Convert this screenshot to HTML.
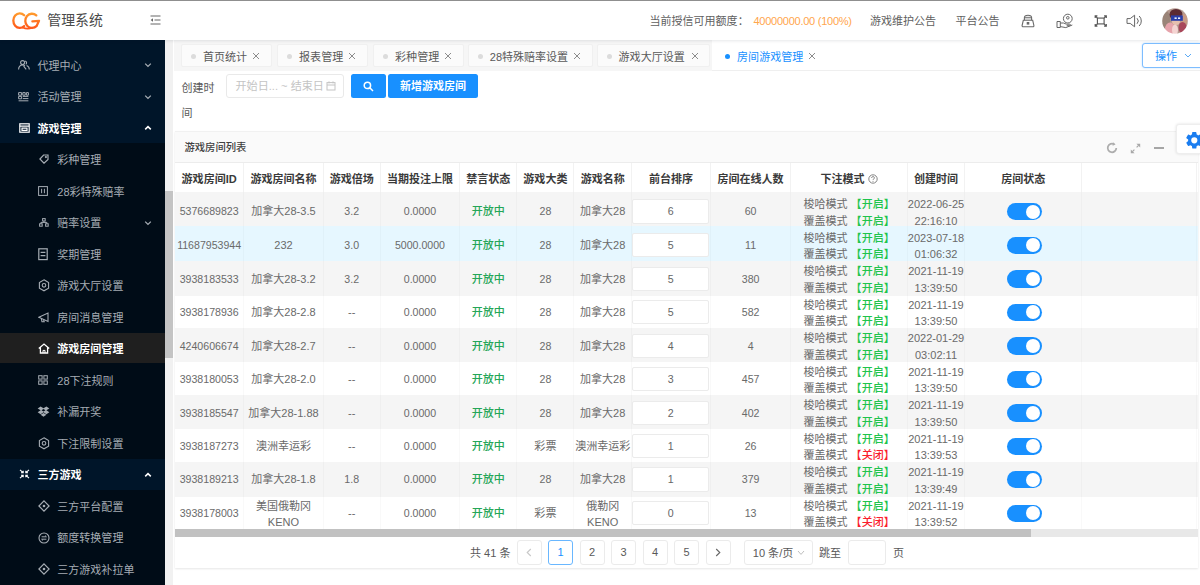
<!DOCTYPE html>
<html lang="zh-CN">
<head>
<meta charset="utf-8">
<title>管理系统</title>
<style>
*{box-sizing:border-box;margin:0;padding:0}
html,body{width:1200px;height:585px;overflow:hidden;background:#fff}
body{position:relative;font-family:"Liberation Sans","Noto Sans CJK SC",sans-serif;font-size:11.025px;color:#595959;line-height:1}
.abs{position:absolute}
/* header */
#hdr{position:absolute;left:0;top:0;width:1200px;height:39.5px;background:#fff;box-shadow:0 1px 3px rgba(0,21,41,.10);z-index:5}
#topline{position:absolute;left:0;top:0;width:1200px;height:1px;background:#8f8f8f;z-index:6}
#title{position:absolute;left:47.3px;top:12.3px;font-size:13.9px;color:#4a4a4a;letter-spacing:0;line-height:16px}
.ht{position:absolute;top:15.4px;line-height:12px;font-size:11.025px;color:#606060;white-space:nowrap}
/* sidebar */
#side{position:absolute;left:0;top:39.5px;width:165.3px;height:546px;background:#001529;z-index:2}
.mi{position:absolute;left:0;width:165.3px;height:30px;color:#a6adb4;white-space:nowrap}
.mi .tx{position:absolute;top:10.300px;line-height:12px;font-size:11.025px}
.mi.top .tx{left:37.500px}
.mi.sub .tx{left:57.300px}
.mi.b{color:#fff}
.mi.b .tx{font-weight:bold}
.mi svg{position:absolute}
.subbg{position:absolute;left:0;width:165.3px;background:#000c17}
.arr{position:absolute;left:144px;top:12px;width:8px;height:8px}
/* sidebar scrollbar */
#sbt{position:absolute;left:165.3px;top:39.5px;width:8.2px;height:546px;background:#f1f1f1;z-index:2}
#sbth{position:absolute;left:165.3px;top:190.5px;width:8.2px;height:167.5px;background:#c4c4c4;z-index:3}
/* tabs */
#tabs{position:absolute;left:173.5px;top:39.5px;width:1027px;height:31.3px;background:#fff;border-bottom:1px solid #efefef}
.tab{position:absolute;top:43.7px;height:23.4px;background:#fbfbfb;border:1px solid #f0f0f0;border-radius:2px;color:#595959;white-space:nowrap}
.tab .dot{position:absolute;left:11px;top:9.3px;width:5px;height:5px;border-radius:50%;background:#dcdcdc}
.tab .t{position:absolute;left:23.5px;top:6.5px;line-height:12px}
.tab .x{position:absolute;top:7.8px;width:8px;height:8px}
.tab.on{background:#fff;border-color:#fff;color:#1890ff}
#strip{position:absolute;left:173.5px;top:39.5px;width:538px;height:31.3px;background:#f6f6f6}
.tab.on .dot{background:#1890ff}
/* card */
#card{position:absolute;left:175px;top:131px;width:1022.5px;height:436.8px;background:#fff;box-shadow:0 1px 2px rgba(0,0,0,.10)}
#chead{position:absolute;left:175px;top:131px;width:1022.5px;height:32px;background:#fafafa;border-top:1px solid #f1f1f1;border-bottom:1px solid #ececec}
.tr{position:absolute;left:175px;width:1022.5px;background:#fff}
.tr.g{background:#f5f5f5}
.tr.h{background:#e6f7ff}
.th,.td{position:absolute;top:0;bottom:0;display:flex;align-items:center;justify-content:center;text-align:center;white-space:nowrap}
.th{font-weight:bold;color:#3a3a3a;border-right:1px solid #f2f2f2;line-height:12px}
.td{color:#6a6a6a;border-right:1px solid rgba(0,0,0,.022);line-height:16.2px}
.ok{color:#25a658;font-weight:500}
.n{font-size:10.6px}
.on1{color:#1fc44c;font-weight:500}
.off1{color:#fa1e2d;font-weight:500}
.inp{display:inline-block;width:76.8px;height:24.2px;border:1px solid #ebebeb;border-radius:2px;background:#fff;line-height:22.2px;margin-left:-.5px;vertical-align:middle;color:#666}
.sw{display:inline-block;left:1.5px;width:34.6px;height:17.3px;border-radius:9px;background:#1890ff;position:relative;vertical-align:middle}
.sw:after{content:"";position:absolute;right:1.6px;top:1.6px;width:14.1px;height:14.1px;border-radius:50%;background:#fff}
/* pagination */
.pg{position:absolute;top:540px;height:25.2px;width:25.2px;border:1px solid #ebebeb;border-radius:3px;background:#fff;text-align:center;line-height:23px;color:#595959;font-size:11.025px}
.pg.on{border-color:#69b7ff;color:#1890ff}
.pt{position:absolute;top:546.8px;line-height:13px;color:#595959;white-space:nowrap}
</style>
</head>
<body>
<div id="topline"></div>
<div id="hdr">
  <svg class="abs" style="left:0;top:0" width="60" height="39" viewBox="0 0 60 39">
    <defs><linearGradient id="lg" x1="0" y1="12" x2="0" y2="29" gradientUnits="userSpaceOnUse"><stop offset="0" stop-color="#ffa02e"/><stop offset="1" stop-color="#ff5418"/></linearGradient></defs>
    <path d="M24.200 15.200A6.500 7.300 0 1 0 24.200 26" fill="none" stroke="url(#lg)" stroke-width="2.300" stroke-linecap="round"/>
    <path d="M36.300 15.400A6.700 7.100 0 1 0 36.700 25.900L39 20.800L32.400 21.300" fill="none" stroke="url(#lg)" stroke-width="2.300" stroke-linecap="round" stroke-linejoin="round"/>
    <path d="M32 27.700Q27.500 29.800 22.500 27.400" fill="none" stroke="url(#lg)" stroke-width="1.800" stroke-linecap="round"/>
  </svg>
  <div id="title">管理系统</div>
  <svg class="abs" style="left:150px;top:15px" width="11" height="10" viewBox="0 0 11 10"><path d="M0.5 1H10.5M4.5 5H10.5M0.5 9H10.5" stroke="#666" stroke-width="1" fill="none"/><path d="M3 3.2L0.6 5L3 6.8Z" fill="#666"/></svg>
  <div class="ht" style="left:649.5px">当前授信可用额度：</div>
  <div class="ht" style="left:753.5px;color:#ffa64d;letter-spacing:-.26px">40000000.00 (100%)</div>
  <div class="ht" style="left:870px">游戏维护公告</div>
  <div class="ht" style="left:955.5px">平台公告</div>
  <!-- lock -->
  <svg class="abs" style="left:1021px;top:14px" width="14" height="14" viewBox="0 0 14 14" fill="none" stroke="#6a6a6a" stroke-width="1.1"><path d="M3.4 6.300V3.600C3.400 0.400 10.600 0.400 10.600 3.600V6.300" fill="#e9e9e9"/><path d="M3.600 3.700h6.800" stroke-width=".9"/><path d="M2.300 6.300h9.400l1.200 5.200c.2.800-.3 1.300-1.100 1.300H2.200c-.8 0-1.300-.5-1.100-1.300z"/><rect x="5.700" y="8" width="2.600" height="2.600" fill="#6a6a6a" stroke="none"/></svg>
  <!-- user hand -->
  <svg class="abs" style="left:1056px;top:13px" width="19" height="16" viewBox="0 0 19 16" fill="none" stroke="#666" stroke-width="1"><circle cx="11.8" cy="5.6" r="4.4"/><circle cx="11.8" cy="4.8" r="1.3"/><path d="M1 8.5h3.3v6H1zM4.3 10h3.2l3 1.2h3.2c1 0 1 1.5 0 1.5h-3M4.3 13.6l5.5 1 6.5-2.6"/></svg>
  <!-- fullscreen -->
  <svg class="abs" style="left:1093.500px;top:14.800px" width="13.500" height="12" viewBox="0 0 15 14" fill="none" stroke="#555" stroke-width="1.300"><rect x="3.600" y="3.600" width="7.800" height="6.800"/><path d="M1 3.600V1h2.600M11.400 1H14v2.600M14 10.400V13h-2.600M3.600 13H1v-2.600M1 1l2.600 2.600M14 1l-2.600 2.600M14 13l-2.600-2.600M1 13l2.600-2.600"/></svg>
  <!-- sound -->
  <svg class="abs" style="left:1126px;top:14px" width="18" height="14" viewBox="0 0 18 14" fill="none" stroke="#666" stroke-width="1"><path d="M1 4.6h3.2L8.6 1.2v11.6L4.2 9.4H1z"/><path d="M11 4.2a4 4 0 0 1 0 5.6M13.2 2a7 7 0 0 1 0 10"/></svg>
  <!-- avatar -->
  <svg class="abs" style="left:1162.400px;top:8px" width="26" height="26" viewBox="0 0 26 26">
    <defs><clipPath id="av"><circle cx="13" cy="13" r="12.800"/></clipPath><filter id="bl" x="-10%" y="-10%" width="120%" height="120%"><feGaussianBlur stdDeviation="0.650"/></filter></defs>
    <g clip-path="url(#av)"><g filter="url(#bl)"><rect x="-2" y="-2" width="30" height="30" fill="#b59a90"/>
    <ellipse cx="4" cy="12" rx="4.500" ry="9" fill="#9a8478"/>
    <ellipse cx="14" cy="6.500" rx="6.500" ry="5.500" fill="#5b2b33"/>
    <ellipse cx="14" cy="13" rx="4" ry="4" fill="#e6bfae"/>
    <ellipse cx="22" cy="12" rx="3.500" ry="6" fill="#c89a84"/>
    <ellipse cx="20.500" cy="19.500" rx="4" ry="5.500" fill="#a8475a"/>
    <ellipse cx="8" cy="21" rx="5" ry="6.500" fill="#e6a3ab"/>
    <ellipse cx="13" cy="22" rx="3" ry="5.500" fill="#f4d4d2"/>
    <rect x="9" y="7.400" width="11.800" height="5.400" fill="#2a3ca8"/>
    <rect x="12.500" y="9.400" width="2.200" height="1.600" fill="#e8eeff"/><rect x="16" y="9.400" width="2.200" height="1.600" fill="#e8eeff"/>
    </g></g>
  </svg>
</div>

<div id="side">
<div class="subbg" style="top:103.75px;height:315.50px"></div>
<div class="subbg" style="top:450.25px;height:200.00px"></div>
<div class="mi top" style="top:9.75px"><svg style="left:18px;top:10.5px" width="12" height="10" viewBox="0 0 12 10" fill="none" stroke="currentColor" stroke-width="1.1"><circle cx="4.6" cy="2.6" r="2"/><path d="M0.6 9.4c0-2.8 1.8-4.4 4-4.4 1 0 1.800.300 2.400.800M7.2 0.900a2 2 0 0 1 0.600 3.500M8.600 5.400c1.600.600 2.700 2 2.700 4M5.600 6.200l2.600 3.200"/></svg><span class="tx">代理中心</span><svg class="arr" viewBox="0 0 8 8" fill="none" stroke="currentColor" stroke-width="1.3"><path d="M1.2 2.6L4 5.4l2.8-2.8"/></svg></div>
<div class="mi top" style="top:41.25px"><svg style="left:18px;top:11px" width="11" height="10" viewBox="0 0 11 10" fill="none" stroke="currentColor" stroke-width="1"><path d="M0.6 0.6h3v2.600h-3zM4.800 0.600h2.400v2.600H4.800zM8.400 0.600h2v2.600h-2zM0.600 4.400h3v2.400h-3zM4.800 4.400h5.600M4.800 6.600h5.600M0.600 8.800h9.800"/></svg><span class="tx">活动管理</span><svg class="arr" viewBox="0 0 8 8" fill="none" stroke="currentColor" stroke-width="1.3"><path d="M1.2 2.6L4 5.4l2.8-2.8"/></svg></div>
<div class="mi top b" style="top:72.75px"><svg style="left:18.5px;top:11px" width="11" height="10" viewBox="0 0 11 10" fill="none" stroke="currentColor" stroke-width="1.2"><rect x="0.8" y="0.8" width="9.4" height="8.4"/><path d="M0.8 3.200h9.400M3 5.200h5v2.200H3z"/></svg><span class="tx">游戏管理</span><svg class="arr" viewBox="0 0 8 8" fill="none" stroke="currentColor" stroke-width="1.5"><path d="M1.2 5.4L4 2.6l2.8 2.8"/></svg></div>
<div class="mi sub" style="top:104.25px"><svg style="left:38.5px;top:10.5px" width="10" height="10" viewBox="0 0 10 10" fill="none" stroke="currentColor" stroke-width="1.2"><path d="M4.6 1h4.400v4.400L5 9.200 0.900 5z"/><circle cx="6.900" cy="3.100" r="0.500"/></svg><span class="tx">彩种管理</span></div>
<div class="mi sub" style="top:135.75px"><svg style="left:38px;top:11px" width="10" height="10" viewBox="0 0 10 10" fill="none" stroke="currentColor" stroke-width="1"><rect x="0.6" y="0.6" width="8.800" height="8.800"/><path d="M3.600 2.800v4.400M6.400 2.800v4.400" stroke-width="1"/></svg><span class="tx">28彩特殊赔率</span></div>
<div class="mi sub" style="top:167.25px"><svg style="left:38.5px;top:11px" width="10" height="9" viewBox="0 0 10 9" fill="none" stroke="currentColor" stroke-width="1"><rect x="3.600" y="0.600" width="2.600" height="2.400"/><rect x="0.600" y="5.800" width="2.600" height="2.400"/><rect x="6.600" y="5.800" width="2.600" height="2.400"/><path d="M4.900 3v1.400M1.900 5.800V4.400h6v1.400"/></svg><span class="tx">赔率设置</span><svg class="arr" viewBox="0 0 8 8" fill="none" stroke="currentColor" stroke-width="1.3"><path d="M1.2 2.6L4 5.4l2.8-2.8"/></svg></div>
<div class="mi sub" style="top:198.75px"><svg style="left:38px;top:9.500px" width="10" height="13" viewBox="0 0 10 13" fill="none" stroke="currentColor" stroke-width="1.2"><rect x="0.8" y="0.8" width="8.400" height="10.800"/><path d="M2.600 4.400h4.800M2.600 7.600h4.800"/></svg><span class="tx">奖期管理</span></div>
<div class="mi sub" style="top:230.25px"><svg style="left:37.500px;top:9.500px" width="12" height="13" viewBox="0 0 12 13" fill="none" stroke="currentColor" stroke-width="1.1"><path d="M6 0.800l4.600 2.700v5.600L6 11.800 1.400 9.100V3.500z"/><circle cx="6" cy="6.300" r="1.800"/></svg><span class="tx">游戏大厅设置</span></div>
<div class="mi sub" style="top:261.75px"><svg style="left:37.500px;top:10.500px" width="12" height="11" viewBox="0 0 12 11" fill="none" stroke="currentColor" stroke-width="1.1"><path d="M0.800 5.200l9.200-4.200v8.400z"/><path d="M3.400 6.800l.600 3h2.200l-.600-2.200"/></svg><span class="tx">房间消息管理</span></div>
<div class="mi sub b sel" style="top:293.25px;background:#1f1f1f"><svg style="left:37.500px;top:10px" width="12" height="11" viewBox="0 0 12 11" fill="none" stroke="currentColor" stroke-width="1.300"><path d="M0.800 5.600L6 1l5.200 4.600M2.400 4.600v5.400h7.200V4.600"/><path d="M5 10V7.400h2V10" stroke-width="1"/></svg><span class="tx">游戏房间管理</span></div>
<div class="mi sub" style="top:324.75px"><svg style="left:38px;top:10.500px" width="10" height="10" viewBox="0 0 10 10" fill="none" stroke="currentColor" stroke-width="1"><rect x="0.700" y="0.700" width="3.400" height="3.400"/><rect x="5.900" y="0.700" width="3.400" height="3.400"/><rect x="0.700" y="5.900" width="3.400" height="3.400"/><rect x="5.900" y="5.900" width="3.400" height="3.400"/></svg><span class="tx">28下注规则</span></div>
<div class="mi sub" style="top:356.25px"><svg style="left:37px;top:10.500px" width="13" height="11" viewBox="0 0 11 9.6" fill="currentColor"><path d="M3 0.400l2.500 1.600L8 0.400l2.600 1.700L8 3.800l2.600 1.700L8 7.200 5.500 5.500 3 7.200 0.400 5.500 3 3.800 0.400 2.100zM5.500 2.600L3.800 3.800l1.700 1.100 1.700-1.100zM3 7.700l2.500 1.600L8 7.700 5.500 6.200z"/></svg><span class="tx">补漏开奖</span></div>
<div class="mi sub" style="top:387.75px"><svg style="left:37.500px;top:9.500px" width="12" height="13" viewBox="0 0 12 13" fill="none" stroke="currentColor" stroke-width="1.1"><path d="M6 0.800l4.600 2.700v5.600L6 11.800 1.400 9.100V3.500z"/><circle cx="6" cy="6.300" r="1.800"/></svg><span class="tx">下注限制设置</span></div>
<div class="mi top b" style="top:419.25px"><svg style="left:18.500px;top:10.500px" width="11" height="10" viewBox="0 0 11 10" fill="none" stroke="currentColor" stroke-width="1.300"><path d="M1 0.800l3 2.800M10 0.800l-3 2.800M1 9.200l3-2.800M10 9.200l-3-2.800M4.200 1.800v2H2M6.800 1.800v2H9M4.200 8.200v-2H2M6.800 8.200v-2H9" stroke-width="1.100"/></svg><span class="tx">三方游戏</span><svg class="arr" viewBox="0 0 8 8" fill="none" stroke="currentColor" stroke-width="1.5"><path d="M1.2 5.4L4 2.6l2.8 2.8"/></svg></div>
<div class="mi sub" style="top:450.75px"><svg style="left:37.500px;top:10px" width="12" height="12" viewBox="0 0 12 12" fill="none" stroke="currentColor" stroke-width="1.200"><path d="M6 0.900l5.100 5.100L6 11.100 0.900 6z"/><circle cx="6" cy="6" r="1.300" fill="currentColor" stroke="none"/></svg><span class="tx">三方平台配置</span></div>
<div class="mi sub" style="top:482.25px"><svg style="left:37.500px;top:10px" width="12" height="12" viewBox="0 0 12 12" fill="none" stroke="currentColor" stroke-width="1.100"><circle cx="6" cy="6" r="5"/><path d="M3.600 4.800h4.800l-1.400-1.200M8.400 7.200H3.600l1.400 1.200" stroke-width="1"/></svg><span class="tx">额度转换管理</span></div>
<div class="mi sub" style="top:513.75px"><svg style="left:37.500px;top:10px" width="12" height="12" viewBox="0 0 12 12" fill="none" stroke="currentColor" stroke-width="1.200"><path d="M6 0.900l5.100 5.100L6 11.100 0.900 6z"/><circle cx="6" cy="6" r="1.300" fill="currentColor" stroke="none"/></svg><span class="tx">三方游戏补拉单</span></div>
</div>
<div id="sbt"></div><div id="sbth"></div>
<div id="tabs"></div><div id="strip"></div>
<div class="tab" style="left:180.8px;width:91.1px"><i class="dot" style="left:9.0px"></i><span class="t" style="left:21.1px">首页统计</span><svg class="x" style="left:69.8px" viewBox="0 0 8 8" fill="none" stroke="#8c8c8c" stroke-width="1"><path d="M1 1l6 6M7 1L1 7"/></svg></div>
<div class="tab" style="left:277.0px;width:91.1px"><i class="dot" style="left:9.0px"></i><span class="t" style="left:21.1px">报表管理</span><svg class="x" style="left:70.0px" viewBox="0 0 8 8" fill="none" stroke="#8c8c8c" stroke-width="1"><path d="M1 1l6 6M7 1L1 7"/></svg></div>
<div class="tab" style="left:373.0px;width:91.1px"><i class="dot" style="left:9.0px"></i><span class="t" style="left:21.1px">彩种管理</span><svg class="x" style="left:69.7px" viewBox="0 0 8 8" fill="none" stroke="#8c8c8c" stroke-width="1"><path d="M1 1l6 6M7 1L1 7"/></svg></div>
<div class="tab" style="left:467.7px;width:125.6px"><i class="dot" style="left:9.0px"></i><span class="t" style="left:21.1px">28特殊赔率设置</span><svg class="x" style="left:104.5px" viewBox="0 0 8 8" fill="none" stroke="#8c8c8c" stroke-width="1"><path d="M1 1l6 6M7 1L1 7"/></svg></div>
<div class="tab" style="left:596.5px;width:113.1px"><i class="dot" style="left:9.0px"></i><span class="t" style="left:21.1px">游戏大厅设置</span><svg class="x" style="left:93.3px" viewBox="0 0 8 8" fill="none" stroke="#8c8c8c" stroke-width="1"><path d="M1 1l6 6M7 1L1 7"/></svg></div>
<div class="tab on" style="left:715.0px;width:113.1px"><i class="dot" style="left:9.0px"></i><span class="t" style="left:21.1px">房间游戏管理</span><svg class="x" style="left:92.0px" viewBox="0 0 8 8" fill="none" stroke="#8c8c8c" stroke-width="1"><path d="M1 1l6 6M7 1L1 7"/></svg></div>
<div class="abs" style="left:181.5px;top:81.7px;line-height:12px;color:#595959">创建时</div>
<div class="abs" style="left:181.5px;top:106.7px;line-height:12px;color:#595959">间</div>
<div class="abs" style="left:225.5px;top:73.6px;width:118.5px;height:24px;border:1px solid #e9e9e9;border-radius:3px;background:#fff"></div>
<div class="abs" style="left:235.5px;top:80.3px;line-height:12px;color:#c4c4c4;white-space:nowrap;font-size:11.1px">开始日... ~ 结束日</div>
<svg class="abs" style="left:326px;top:80.8px" width="10" height="10" viewBox="0 0 10 10" fill="none" stroke="#c4c4c4" stroke-width="1"><rect x="1" y="1.6" width="8" height="7.4"/><path d="M1 4h8M3 0.4v2M7 0.4v2"/></svg>
<div class="abs" style="left:351.3px;top:73.6px;width:34.3px;height:24.8px;background:#1890ff;border-radius:2.5px"></div>
<svg class="abs" style="left:363px;top:80.5px" width="11" height="11" viewBox="0 0 11 11" fill="none" stroke="#fff" stroke-width="1.5"><circle cx="4.4" cy="4.4" r="3.2"/><path d="M6.8 6.8l3.2 3.2"/></svg>
<div class="abs" style="left:388px;top:73.6px;width:90px;height:24.8px;background:#1890ff;border-radius:2.5px;color:#fff;font-weight:bold;text-align:center;line-height:25.4px;font-size:11.025px">新增游戏房间</div>
<div class="abs" style="left:1142.3px;top:42.8px;width:70px;height:25.7px;border:1px solid #7dbdff;border-radius:3px;background:#fff;box-shadow:0 0 2px rgba(24,144,255,.3)"></div>
<div class="abs" style="left:1155px;top:49.5px;line-height:12px;color:#1890ff">操作</div>
<svg class="abs" style="left:1183.5px;top:52.5px" width="8" height="6" viewBox="0 0 8 6" fill="none" stroke="#5aa9f5" stroke-width="1"><path d="M1 1l3 3L7 1"/></svg>

<div id="card"></div>
<div id="chead"></div>
<div class="abs" style="left:184.5px;top:141.5px;line-height:12px;font-size:10.3px;font-weight:500;color:#404040;white-space:nowrap">游戏房间列表</div>
<svg class="abs" style="left:1105.700px;top:142.300px" width="12" height="12" viewBox="0 0 12 12" fill="none" stroke="#adadad" stroke-width="1.800"><path d="M10.300 6A4.300 4.300 0 1 1 8.200 2.300"/><path d="M7 0.300l2.600 2.200-3 1.300z" fill="#adadad" stroke="none"/></svg>
<svg class="abs" style="left:1129.500px;top:142.800px" width="11" height="11" viewBox="0 0 11 11" fill="#a8a8a8" stroke="#a8a8a8" stroke-width="1.200"><path d="M10.200 0.800v3.800L6.400 0.800zM0.800 10.200V6.400l3.800 3.800z" stroke="none"/><path d="M6.600 4.400l2-2M4.400 6.600l-2 2"/></svg>
<div class="abs" style="left:1153.8px;top:147px;width:10px;height:2px;background:#a6a6a6"></div>
<div class="abs" style="left:1175.5px;top:123.6px;width:30px;height:30.2px;background:#fff;border:1px solid #eee;border-radius:3px 0 0 3px;box-shadow:0 0 3px rgba(0,0,0,.12);z-index:4"></div>
<svg class="abs" style="left:1183.5px;top:129.7px;z-index:5" width="20.6" height="20.6" viewBox="0 0 24 24" fill="#1a7df0"><path d="M19.14 12.94c.04-.3.06-.61.06-.94s-.02-.64-.07-.94l2.03-1.58a.49.49 0 0 0 .12-.61l-1.92-3.32a.49.49 0 0 0-.59-.22l-2.39.96c-.5-.38-1.03-.7-1.62-.94l-.36-2.54a.484.484 0 0 0-.48-.41h-3.84c-.24 0-.43.17-.47.41l-.36 2.54c-.59.24-1.13.57-1.62.94l-2.39-.96a.49.49 0 0 0-.59.22L2.74 8.87c-.12.21-.08.47.12.61l2.03 1.58c-.05.3-.09.63-.09.94s.02.64.07.94l-2.03 1.58a.49.49 0 0 0-.12.61l1.92 3.32c.12.22.37.29.59.22l2.39-.96c.5.38 1.03.7 1.62.94l.36 2.54c.05.24.24.41.48.41h3.84c.24 0 .44-.17.47-.41l.36-2.54c.59-.24 1.13-.56 1.62-.94l2.39.96c.22.08.47 0 .59-.22l1.92-3.32c.12-.22.07-.47-.12-.61l-2.01-1.58zM12 15.6A3.6 3.6 0 1 1 12 8.4a3.6 3.6 0 0 1 0 7.2z"/></svg>

<div class="tr" style="top:163.0px;height:29.2px;background:#fff">
<div class="th" style="left:0.0px;width:69.3px"><span style="position:relative;top:1.2px">游戏房间ID</span></div>
<div class="th" style="left:69.3px;width:79.3px"><span style="position:relative;top:1.2px">游戏房间名称</span></div>
<div class="th" style="left:148.6px;width:57.2px"><span style="position:relative;top:1.2px">游戏倍场</span></div>
<div class="th" style="left:205.8px;width:79.3px"><span style="position:relative;top:1.2px">当期投注上限</span></div>
<div class="th" style="left:285.1px;width:57.2px"><span style="position:relative;top:1.2px">禁言状态</span></div>
<div class="th" style="left:342.3px;width:57.2px"><span style="position:relative;top:1.2px">游戏大类</span></div>
<div class="th" style="left:399.5px;width:57.4px"><span style="position:relative;top:1.2px">游戏名称</span></div>
<div class="th" style="left:456.9px;width:79.2px"><span style="position:relative;top:1.2px">前台排序</span></div>
<div class="th" style="left:536.1px;width:80.0px"><span style="position:relative;top:1.2px">房间在线人数</span></div>
<div class="th" style="left:616.1px;width:117.0px"><span style="position:relative;top:1.2px">下注模式 <svg width="10" height="10" viewBox="0 0 10 10" style="vertical-align:-1px" fill="none" stroke="#777" stroke-width=".9"><circle cx="5" cy="5" r="4.2"/><path d="M3.6 3.9a1.4 1.3 0 1 1 1.9 1.2c-.4.2-.5.5-.5 1M5 7.2v.8"/></svg></span></div>
<div class="th" style="left:733.1px;width:56.8px"><span style="position:relative;top:1.2px">创建时间</span></div>
<div class="th" style="left:789.9px;width:117.6px"><span style="position:relative;top:1.2px">房间状态</span></div>
<div class="th" style="left:907.5px;width:114.5px"><span style="position:relative;top:1.2px"></span></div>
</div>
<div class="tr g" style="top:192.2px;height:33.8px">
<div class="td" style="left:0.0px;width:69.3px"><div style="position:relative;top:2.5px"><span class="n">5376689823</span></div></div>
<div class="td" style="left:69.3px;width:79.3px"><div style="position:relative;top:2.5px">加拿大28-3.5</div></div>
<div class="td" style="left:148.6px;width:57.2px"><div style="position:relative;top:2.5px"><span class="n">3.2</span></div></div>
<div class="td" style="left:205.8px;width:79.3px"><div style="position:relative;top:2.5px"><span class="n">0.0000</span></div></div>
<div class="td" style="left:285.1px;width:57.2px"><div style="position:relative;top:2.5px"><span class="ok">开放中</span></div></div>
<div class="td" style="left:342.3px;width:57.2px"><div style="position:relative;top:2.5px"><span class="n">28</span></div></div>
<div class="td" style="left:399.5px;width:57.4px"><div style="position:relative;top:2.5px">加拿大28</div></div>
<div class="td" style="left:456.9px;width:79.2px"><div style="position:relative;top:2.5px"><span class="inp n">6</span></div></div>
<div class="td" style="left:536.1px;width:80.0px"><div style="position:relative;top:2.5px"><span class="n">60</span></div></div>
<div class="td" style="left:616.1px;width:117.0px"><div style="position:relative;top:3.5px">梭哈模式 <span class="on1">【开启】</span><br>覆盖模式 <span class="on1">【开启】</span></div></div>
<div class="td" style="left:733.1px;width:56.8px"><div style="position:relative;top:3.5px">2022-06-25<br>22:16:10</div></div>
<div class="td" style="left:789.9px;width:117.6px"><div style="position:relative;top:2.5px"><span class="sw"></span></div></div>
<div class="td" style="left:907.5px;width:114.5px"><div style="position:relative;top:2.5px"></div></div>
</div>
<div class="tr h" style="top:226.0px;height:35.0px">
<div class="td" style="left:0.0px;width:69.3px"><div style="position:relative;top:1.6px"><span class="n">11687953944</span></div></div>
<div class="td" style="left:69.3px;width:79.3px"><div style="position:relative;top:1.6px">232</div></div>
<div class="td" style="left:148.6px;width:57.2px"><div style="position:relative;top:1.6px"><span class="n">3.0</span></div></div>
<div class="td" style="left:205.8px;width:79.3px"><div style="position:relative;top:1.6px"><span class="n">5000.0000</span></div></div>
<div class="td" style="left:285.1px;width:57.2px"><div style="position:relative;top:1.6px"><span class="ok">开放中</span></div></div>
<div class="td" style="left:342.3px;width:57.2px"><div style="position:relative;top:1.6px"><span class="n">28</span></div></div>
<div class="td" style="left:399.5px;width:57.4px"><div style="position:relative;top:1.6px">加拿大28</div></div>
<div class="td" style="left:456.9px;width:79.2px"><div style="position:relative;top:1.6px"><span class="inp n">5</span></div></div>
<div class="td" style="left:536.1px;width:80.0px"><div style="position:relative;top:1.6px"><span class="n">11</span></div></div>
<div class="td" style="left:616.1px;width:117.0px"><div style="position:relative;top:2.6px">梭哈模式 <span class="on1">【开启】</span><br>覆盖模式 <span class="on1">【开启】</span></div></div>
<div class="td" style="left:733.1px;width:56.8px"><div style="position:relative;top:2.6px">2023-07-18<br>01:06:32</div></div>
<div class="td" style="left:789.9px;width:117.6px"><div style="position:relative;top:1.6px"><span class="sw"></span></div></div>
<div class="td" style="left:907.5px;width:114.5px"><div style="position:relative;top:1.6px"></div></div>
</div>
<div class="tr g" style="top:261.0px;height:34.5px">
<div class="td" style="left:0.0px;width:69.3px"><div style="position:relative;top:0.4px"><span class="n">3938183533</span></div></div>
<div class="td" style="left:69.3px;width:79.3px"><div style="position:relative;top:0.4px">加拿大28-3.2</div></div>
<div class="td" style="left:148.6px;width:57.2px"><div style="position:relative;top:0.4px"><span class="n">3.2</span></div></div>
<div class="td" style="left:205.8px;width:79.3px"><div style="position:relative;top:0.4px"><span class="n">0.0000</span></div></div>
<div class="td" style="left:285.1px;width:57.2px"><div style="position:relative;top:0.4px"><span class="ok">开放中</span></div></div>
<div class="td" style="left:342.3px;width:57.2px"><div style="position:relative;top:0.4px"><span class="n">28</span></div></div>
<div class="td" style="left:399.5px;width:57.4px"><div style="position:relative;top:0.4px">加拿大28</div></div>
<div class="td" style="left:456.9px;width:79.2px"><div style="position:relative;top:0.4px"><span class="inp n">5</span></div></div>
<div class="td" style="left:536.1px;width:80.0px"><div style="position:relative;top:0.4px"><span class="n">380</span></div></div>
<div class="td" style="left:616.1px;width:117.0px"><div style="position:relative;top:1.4px">梭哈模式 <span class="on1">【开启】</span><br>覆盖模式 <span class="on1">【开启】</span></div></div>
<div class="td" style="left:733.1px;width:56.8px"><div style="position:relative;top:1.4px">2021-11-19<br>13:39:50</div></div>
<div class="td" style="left:789.9px;width:117.6px"><div style="position:relative;top:0.4px"><span class="sw"></span></div></div>
<div class="td" style="left:907.5px;width:114.5px"><div style="position:relative;top:0.4px"></div></div>
</div>
<div class="tr " style="top:295.5px;height:32.8px">
<div class="td" style="left:0.0px;width:69.3px"><div style="position:relative;top:0.2px"><span class="n">3938178936</span></div></div>
<div class="td" style="left:69.3px;width:79.3px"><div style="position:relative;top:0.2px">加拿大28-2.8</div></div>
<div class="td" style="left:148.6px;width:57.2px"><div style="position:relative;top:0.2px">--</div></div>
<div class="td" style="left:205.8px;width:79.3px"><div style="position:relative;top:0.2px"><span class="n">0.0000</span></div></div>
<div class="td" style="left:285.1px;width:57.2px"><div style="position:relative;top:0.2px"><span class="ok">开放中</span></div></div>
<div class="td" style="left:342.3px;width:57.2px"><div style="position:relative;top:0.2px"><span class="n">28</span></div></div>
<div class="td" style="left:399.5px;width:57.4px"><div style="position:relative;top:0.2px">加拿大28</div></div>
<div class="td" style="left:456.9px;width:79.2px"><div style="position:relative;top:0.2px"><span class="inp n">5</span></div></div>
<div class="td" style="left:536.1px;width:80.0px"><div style="position:relative;top:0.2px"><span class="n">582</span></div></div>
<div class="td" style="left:616.1px;width:117.0px"><div style="position:relative;top:1.2px">梭哈模式 <span class="on1">【开启】</span><br>覆盖模式 <span class="on1">【开启】</span></div></div>
<div class="td" style="left:733.1px;width:56.8px"><div style="position:relative;top:1.2px">2021-11-19<br>13:39:50</div></div>
<div class="td" style="left:789.9px;width:117.6px"><div style="position:relative;top:0.2px"><span class="sw"></span></div></div>
<div class="td" style="left:907.5px;width:114.5px"><div style="position:relative;top:0.2px"></div></div>
</div>
<div class="tr g" style="top:328.3px;height:33.7px">
<div class="td" style="left:0.0px;width:69.3px"><div style="position:relative;top:0.5px"><span class="n">4240606674</span></div></div>
<div class="td" style="left:69.3px;width:79.3px"><div style="position:relative;top:0.5px">加拿大28-2.7</div></div>
<div class="td" style="left:148.6px;width:57.2px"><div style="position:relative;top:0.5px">--</div></div>
<div class="td" style="left:205.8px;width:79.3px"><div style="position:relative;top:0.5px"><span class="n">0.0000</span></div></div>
<div class="td" style="left:285.1px;width:57.2px"><div style="position:relative;top:0.5px"><span class="ok">开放中</span></div></div>
<div class="td" style="left:342.3px;width:57.2px"><div style="position:relative;top:0.5px"><span class="n">28</span></div></div>
<div class="td" style="left:399.5px;width:57.4px"><div style="position:relative;top:0.5px">加拿大28</div></div>
<div class="td" style="left:456.9px;width:79.2px"><div style="position:relative;top:0.5px"><span class="inp n">4</span></div></div>
<div class="td" style="left:536.1px;width:80.0px"><div style="position:relative;top:0.5px"><span class="n">4</span></div></div>
<div class="td" style="left:616.1px;width:117.0px"><div style="position:relative;top:1.5px">梭哈模式 <span class="on1">【开启】</span><br>覆盖模式 <span class="on1">【开启】</span></div></div>
<div class="td" style="left:733.1px;width:56.8px"><div style="position:relative;top:1.5px">2022-01-29<br>03:02:11</div></div>
<div class="td" style="left:789.9px;width:117.6px"><div style="position:relative;top:0.5px"><span class="sw"></span></div></div>
<div class="td" style="left:907.5px;width:114.5px"><div style="position:relative;top:0.5px"></div></div>
</div>
<div class="tr " style="top:362.0px;height:32.8px">
<div class="td" style="left:0.0px;width:69.3px"><div style="position:relative;top:0.7px"><span class="n">3938180053</span></div></div>
<div class="td" style="left:69.3px;width:79.3px"><div style="position:relative;top:0.7px">加拿大28-2.0</div></div>
<div class="td" style="left:148.6px;width:57.2px"><div style="position:relative;top:0.7px">--</div></div>
<div class="td" style="left:205.8px;width:79.3px"><div style="position:relative;top:0.7px"><span class="n">0.0000</span></div></div>
<div class="td" style="left:285.1px;width:57.2px"><div style="position:relative;top:0.7px"><span class="ok">开放中</span></div></div>
<div class="td" style="left:342.3px;width:57.2px"><div style="position:relative;top:0.7px"><span class="n">28</span></div></div>
<div class="td" style="left:399.5px;width:57.4px"><div style="position:relative;top:0.7px">加拿大28</div></div>
<div class="td" style="left:456.9px;width:79.2px"><div style="position:relative;top:0.7px"><span class="inp n">3</span></div></div>
<div class="td" style="left:536.1px;width:80.0px"><div style="position:relative;top:0.7px"><span class="n">457</span></div></div>
<div class="td" style="left:616.1px;width:117.0px"><div style="position:relative;top:1.7px">梭哈模式 <span class="on1">【开启】</span><br>覆盖模式 <span class="on1">【开启】</span></div></div>
<div class="td" style="left:733.1px;width:56.8px"><div style="position:relative;top:1.7px">2021-11-19<br>13:39:50</div></div>
<div class="td" style="left:789.9px;width:117.6px"><div style="position:relative;top:0.7px"><span class="sw"></span></div></div>
<div class="td" style="left:907.5px;width:114.5px"><div style="position:relative;top:0.7px"></div></div>
</div>
<div class="tr g" style="top:394.8px;height:33.9px">
<div class="td" style="left:0.0px;width:69.3px"><div style="position:relative;top:0.9px"><span class="n">3938185547</span></div></div>
<div class="td" style="left:69.3px;width:79.3px"><div style="position:relative;top:0.9px">加拿大28-1.88</div></div>
<div class="td" style="left:148.6px;width:57.2px"><div style="position:relative;top:0.9px">--</div></div>
<div class="td" style="left:205.8px;width:79.3px"><div style="position:relative;top:0.9px"><span class="n">0.0000</span></div></div>
<div class="td" style="left:285.1px;width:57.2px"><div style="position:relative;top:0.9px"><span class="ok">开放中</span></div></div>
<div class="td" style="left:342.3px;width:57.2px"><div style="position:relative;top:0.9px"><span class="n">28</span></div></div>
<div class="td" style="left:399.5px;width:57.4px"><div style="position:relative;top:0.9px">加拿大28</div></div>
<div class="td" style="left:456.9px;width:79.2px"><div style="position:relative;top:0.9px"><span class="inp n">2</span></div></div>
<div class="td" style="left:536.1px;width:80.0px"><div style="position:relative;top:0.9px"><span class="n">402</span></div></div>
<div class="td" style="left:616.1px;width:117.0px"><div style="position:relative;top:1.9px">梭哈模式 <span class="on1">【开启】</span><br>覆盖模式 <span class="on1">【开启】</span></div></div>
<div class="td" style="left:733.1px;width:56.8px"><div style="position:relative;top:1.9px">2021-11-19<br>13:39:50</div></div>
<div class="td" style="left:789.9px;width:117.6px"><div style="position:relative;top:0.9px"><span class="sw"></span></div></div>
<div class="td" style="left:907.5px;width:114.5px"><div style="position:relative;top:0.9px"></div></div>
</div>
<div class="tr " style="top:428.7px;height:33.3px">
<div class="td" style="left:0.0px;width:69.3px"><div style="position:relative;top:0.8px"><span class="n">3938187273</span></div></div>
<div class="td" style="left:69.3px;width:79.3px"><div style="position:relative;top:0.8px">澳洲幸运彩</div></div>
<div class="td" style="left:148.6px;width:57.2px"><div style="position:relative;top:0.8px">--</div></div>
<div class="td" style="left:205.8px;width:79.3px"><div style="position:relative;top:0.8px"><span class="n">0.0000</span></div></div>
<div class="td" style="left:285.1px;width:57.2px"><div style="position:relative;top:0.8px"><span class="ok">开放中</span></div></div>
<div class="td" style="left:342.3px;width:57.2px"><div style="position:relative;top:0.8px">彩票</div></div>
<div class="td" style="left:399.5px;width:57.4px"><div style="position:relative;top:0.8px">澳洲幸运彩</div></div>
<div class="td" style="left:456.9px;width:79.2px"><div style="position:relative;top:0.8px"><span class="inp n">1</span></div></div>
<div class="td" style="left:536.1px;width:80.0px"><div style="position:relative;top:0.8px"><span class="n">26</span></div></div>
<div class="td" style="left:616.1px;width:117.0px"><div style="position:relative;top:1.8px">梭哈模式 <span class="on1">【开启】</span><br>覆盖模式 <span class="off1">【关闭】</span></div></div>
<div class="td" style="left:733.1px;width:56.8px"><div style="position:relative;top:1.8px">2021-11-19<br>13:39:53</div></div>
<div class="td" style="left:789.9px;width:117.6px"><div style="position:relative;top:0.8px"><span class="sw"></span></div></div>
<div class="td" style="left:907.5px;width:114.5px"><div style="position:relative;top:0.8px"></div></div>
</div>
<div class="tr g" style="top:462.0px;height:34.8px">
<div class="td" style="left:0.0px;width:69.3px"><div style="position:relative;top:0.2px"><span class="n">3938189213</span></div></div>
<div class="td" style="left:69.3px;width:79.3px"><div style="position:relative;top:0.2px">加拿大28-1.8</div></div>
<div class="td" style="left:148.6px;width:57.2px"><div style="position:relative;top:0.2px"><span class="n">1.8</span></div></div>
<div class="td" style="left:205.8px;width:79.3px"><div style="position:relative;top:0.2px"><span class="n">0.0000</span></div></div>
<div class="td" style="left:285.1px;width:57.2px"><div style="position:relative;top:0.2px"><span class="ok">开放中</span></div></div>
<div class="td" style="left:342.3px;width:57.2px"><div style="position:relative;top:0.2px"><span class="n">28</span></div></div>
<div class="td" style="left:399.5px;width:57.4px"><div style="position:relative;top:0.2px">加拿大28</div></div>
<div class="td" style="left:456.9px;width:79.2px"><div style="position:relative;top:0.2px"><span class="inp n">1</span></div></div>
<div class="td" style="left:536.1px;width:80.0px"><div style="position:relative;top:0.2px"><span class="n">379</span></div></div>
<div class="td" style="left:616.1px;width:117.0px"><div style="position:relative;top:1.2px">梭哈模式 <span class="on1">【开启】</span><br>覆盖模式 <span class="on1">【开启】</span></div></div>
<div class="td" style="left:733.1px;width:56.8px"><div style="position:relative;top:1.2px">2021-11-19<br>13:39:49</div></div>
<div class="td" style="left:789.9px;width:117.6px"><div style="position:relative;top:0.2px"><span class="sw"></span></div></div>
<div class="td" style="left:907.5px;width:114.5px"><div style="position:relative;top:0.2px"></div></div>
</div>
<div class="tr " style="top:496.8px;height:32.7px">
<div class="td" style="left:0.0px;width:69.3px"><div style="position:relative;top:-0.0px"><span class="n">3938178003</span></div></div>
<div class="td" style="left:69.3px;width:79.3px"><div style="position:relative;top:1.0px">美国俄勒冈<br>KENO</div></div>
<div class="td" style="left:148.6px;width:57.2px"><div style="position:relative;top:-0.0px">--</div></div>
<div class="td" style="left:205.8px;width:79.3px"><div style="position:relative;top:-0.0px"><span class="n">0.0000</span></div></div>
<div class="td" style="left:285.1px;width:57.2px"><div style="position:relative;top:-0.0px"><span class="ok">开放中</span></div></div>
<div class="td" style="left:342.3px;width:57.2px"><div style="position:relative;top:-0.0px">彩票</div></div>
<div class="td" style="left:399.5px;width:57.4px"><div style="position:relative;top:1.0px">俄勒冈<br>KENO</div></div>
<div class="td" style="left:456.9px;width:79.2px"><div style="position:relative;top:-0.0px"><span class="inp n">0</span></div></div>
<div class="td" style="left:536.1px;width:80.0px"><div style="position:relative;top:-0.0px"><span class="n">13</span></div></div>
<div class="td" style="left:616.1px;width:117.0px"><div style="position:relative;top:1.0px">梭哈模式 <span class="on1">【开启】</span><br>覆盖模式 <span class="off1">【关闭】</span></div></div>
<div class="td" style="left:733.1px;width:56.8px"><div style="position:relative;top:1.0px">2021-11-19<br>13:39:52</div></div>
<div class="td" style="left:789.9px;width:117.6px"><div style="position:relative;top:-0.0px"><span class="sw"></span></div></div>
<div class="td" style="left:907.5px;width:114.5px"><div style="position:relative;top:-0.0px"></div></div>
</div>
<div class="abs" style="left:175px;top:529.3px;width:1022.5px;height:8px;background:#e8e8e8"></div>
<div class="abs" style="left:175px;top:529.3px;width:856px;height:8px;background:#c1c1c1"></div>

<div class="pt" style="left:470px">共 41 条</div>
<div class="pg" style="left:516.5px;color:#c8c8c8"><svg width="6" height="9" viewBox="0 0 6 9" fill="none" stroke="#c8c8c8" stroke-width="1.1" style="vertical-align:-1px"><path d="M4.8 1L1.2 4.5l3.600 3.500"/></svg></div>
<div class="pg on" style="left:548.0px">1</div>
<div class="pg" style="left:579.5px">2</div>
<div class="pg" style="left:611.0px">3</div>
<div class="pg" style="left:642.5px">4</div>
<div class="pg" style="left:674.0px">5</div>
<div class="pg" style="left:705.5px"><svg width="6" height="9" viewBox="0 0 6 9" fill="none" stroke="#666" stroke-width="1.1" style="vertical-align:-1px"><path d="M1.200 1l3.600 3.500-3.600 3.500"/></svg></div>
<div class="pg" style="left:743.5px;width:69px;text-align:left;padding-left:8.3px;line-height:24.6px">10 条/页<svg style="position:absolute;left:52px;top:8.5px" width="8" height="6" viewBox="0 0 8 6" fill="none" stroke="#bfbfbf" stroke-width="1"><path d="M1 1l3 3.4L7 1"/></svg></div>
<div class="pt" style="left:819px">跳至</div>
<div class="pg" style="left:847.7px;width:38.6px"></div>
<div class="pt" style="left:893px">页</div>
</body>
</html>
